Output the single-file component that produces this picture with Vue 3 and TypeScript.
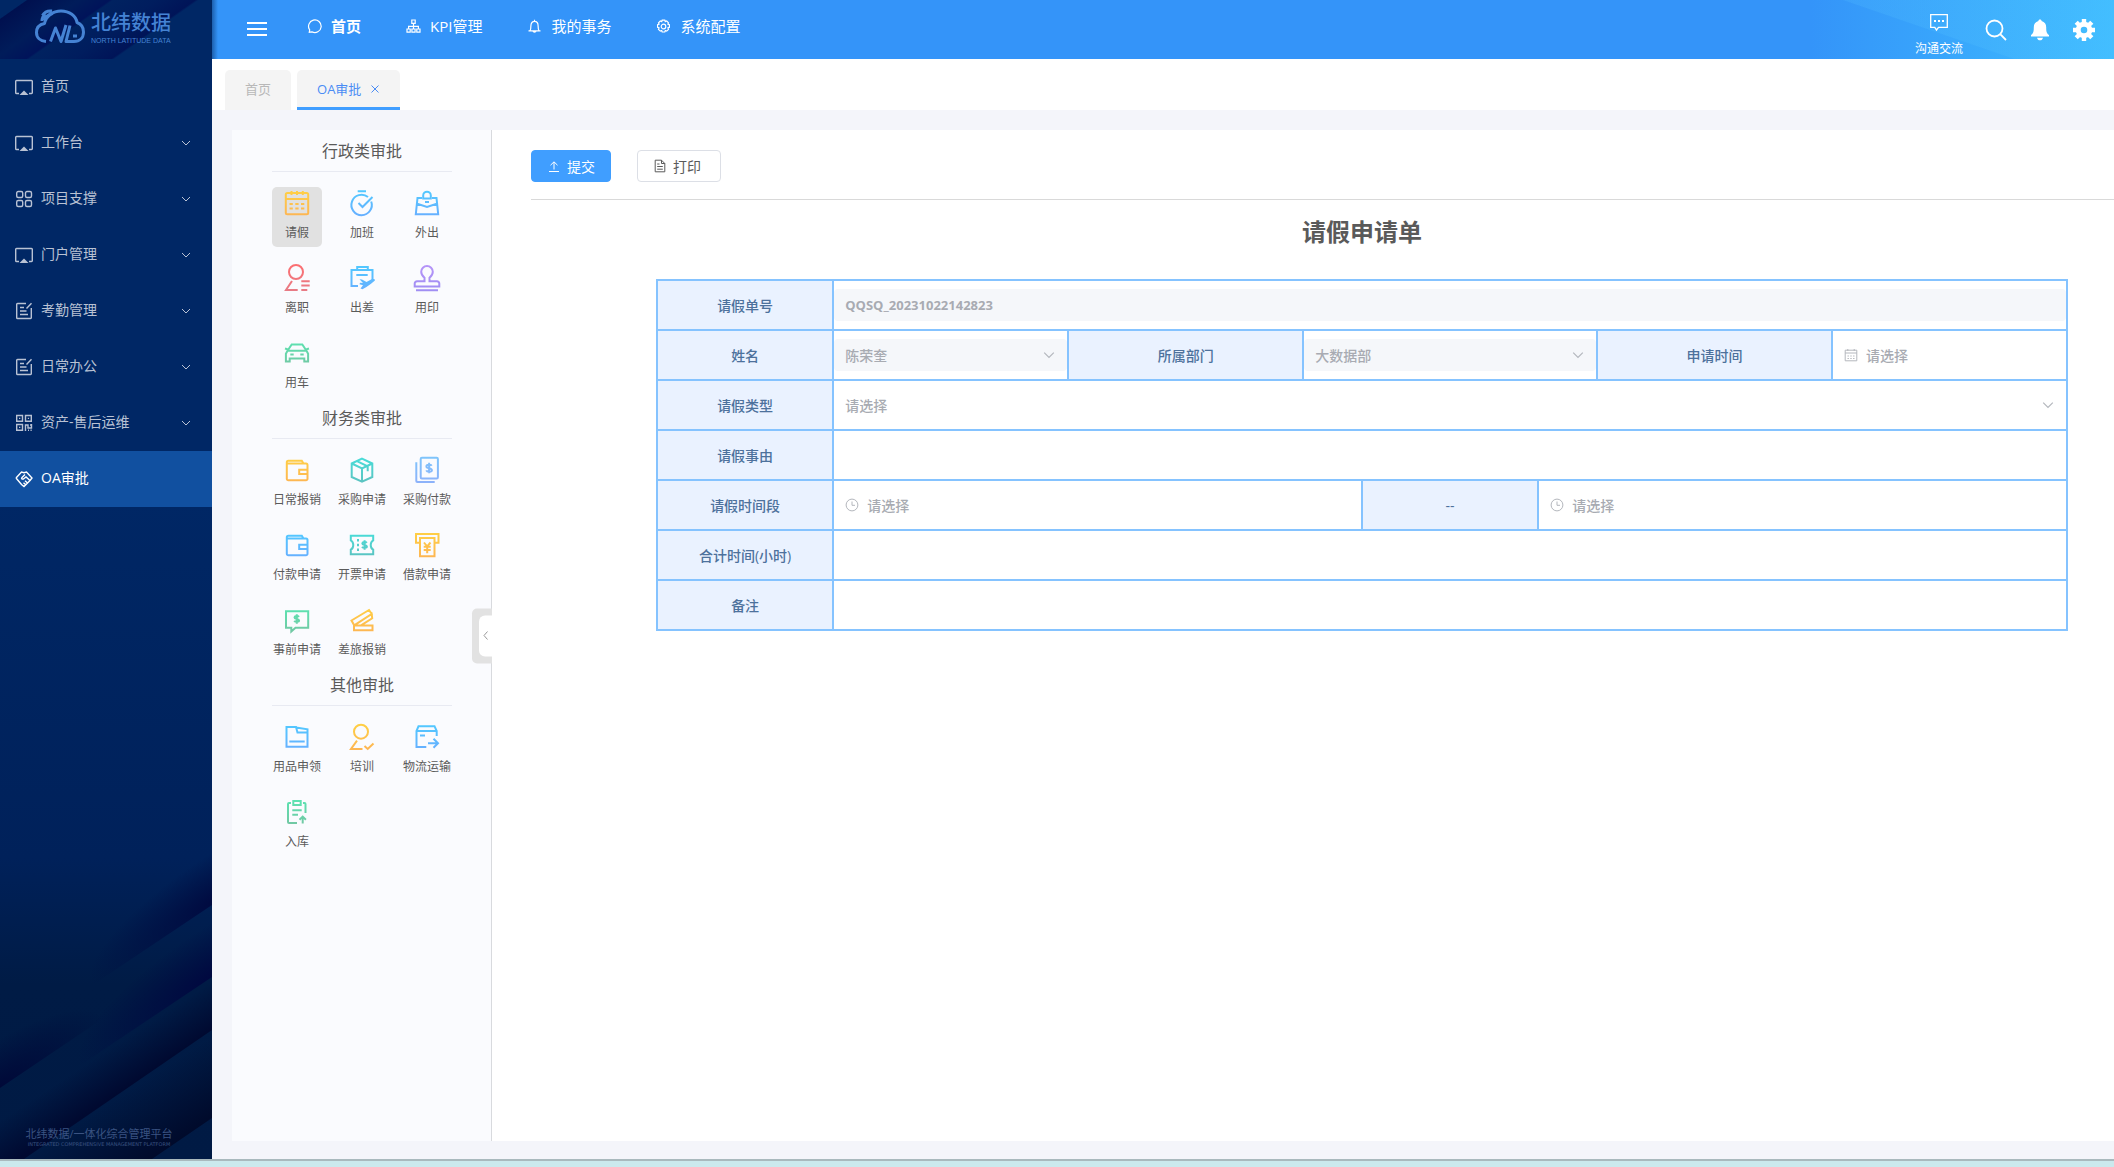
<script setup lang="ts">
import { ref } from 'vue'

interface MenuItem { label: string; icon: string; expandable: boolean; active?: boolean }
interface AppItem { label: string; icon: string; tone: string; active?: boolean }
interface AppSection { title: string; items: AppItem[] }

const menu: MenuItem[] = [
  { label: '首页', icon: 'screen', expandable: false },
  { label: '工作台', icon: 'screen', expandable: true },
  { label: '项目支撑', icon: 'grid', expandable: true },
  { label: '门户管理', icon: 'screen', expandable: true },
  { label: '考勤管理', icon: 'edit', expandable: true },
  { label: '日常办公', icon: 'edit', expandable: true },
  { label: '资产-售后运维', icon: 'qr', expandable: true },
  { label: 'OA审批', icon: 'shake', expandable: false, active: true },
]

const topNav = [
  { label: '首页', icon: 'bubble', active: true },
  { label: 'KPI管理', icon: 'tree', active: false },
  { label: '我的事务', icon: 'bell', active: false },
  { label: '系统配置', icon: 'cog', active: false },
]

const sections: AppSection[] = [
  {
    title: '行政类审批',
    items: [
      { label: '请假', icon: 'leave', tone: 'amber', active: true },
      { label: '加班', icon: 'timer', tone: 'blue' },
      { label: '外出', icon: 'outing', tone: 'blue' },
      { label: '离职', icon: 'resign', tone: 'red' },
      { label: '出差', icon: 'trip', tone: 'blue' },
      { label: '用印', icon: 'stamp', tone: 'purple' },
      { label: '用车', icon: 'car', tone: 'green' },
    ],
  },
  {
    title: '财务类审批',
    items: [
      { label: '日常报销', icon: 'wallet', tone: 'amber' },
      { label: '采购申请', icon: 'box', tone: 'teal' },
      { label: '采购付款', icon: 'bill', tone: 'sky' },
      { label: '付款申请', icon: 'wallet', tone: 'blue' },
      { label: '开票申请', icon: 'ticket', tone: 'teal' },
      { label: '借款申请', icon: 'loan', tone: 'amber' },
      { label: '事前申请', icon: 'quote', tone: 'green' },
      { label: '差旅报销', icon: 'cards', tone: 'amber' },
    ],
  },
  {
    title: '其他审批',
    items: [
      { label: '用品申领', icon: 'folder', tone: 'blue' },
      { label: '培训', icon: 'training', tone: 'amber' },
      { label: '物流运输', icon: 'ship', tone: 'blue' },
      { label: '入库', icon: 'inbound', tone: 'green' },
    ],
  },
]

const tones = [
  { name: 'amber', from: '#ffcf45', to: '#fdb653' },
  { name: 'blue', from: '#52c8ff', to: '#66b0ff' },
  { name: 'sky', from: '#7fc4fb', to: '#8cb2fa' },
  { name: 'red', from: '#fb6f72', to: '#e87b85' },
  { name: 'purple', from: '#b594f8', to: '#a08ef3' },
  { name: 'green', from: '#5be3b1', to: '#72c8a4' },
  { name: 'teal', from: '#48dcd8', to: '#5cc3c1' },
]

const reason = ref('')
const hours = ref('')
const remark = ref('')
const leaveType = ref('')
</script>

<template>
  <div class="page">
    <svg class="sprite" aria-hidden="true">
      <defs>
        <linearGradient v-for="t in tones" :id="'tone-' + t.name" :key="t.name" gradientUnits="userSpaceOnUse" x1="0" y1="2" x2="0" y2="26">
          <stop offset="0" :stop-color="t.from" />
          <stop offset="1" :stop-color="t.to" />
        </linearGradient>
      </defs>
      <symbol id="i-screen" viewBox="0 0 18 18"><path d="M4 15.500H1.500a.8.8 0 0 1-.8-.8V3.300a.8.8 0 0 1 .8-.8h15a.8.8 0 0 1 .8.8v11.400a.8.8 0 0 1-.8.8H14" /><path class="solid" stroke="none" d="M9 12.500l4.500 4.500h-9z" /></symbol>
      <symbol id="i-grid" viewBox="0 0 18 18"><rect x="1.700" y="1.500" width="6" height="6" rx="1.500" /><rect x="10.500" y="1.500" width="6" height="6" rx="1.500" /><rect x="1.700" y="10.500" width="6" height="6" rx="1.500" /><rect x="10.500" y="10.500" width="6" height="6" rx="1.500" /></symbol>
      <symbol id="i-edit" viewBox="0 0 18 18"><path d="M11 1.500H2.500a.8.8 0 0 0-.8.8v13.400a.8.8 0 0 0 .8.8h13a.8.8 0 0 0 .8-.8V6M16.500 1.200L11.500 6.500M5 5.500h4M5 9h6.500M5 12.500h8" /></symbol>
      <symbol id="i-qr" viewBox="0 0 18 18"><path d="M1.700 1.500h5.800v5.800H1.700zM10.500 1.500h5.800v5.800h-5.800zM1.700 10.500h5.800v5.800H1.700zM4 4.400h1.300M12.800 4.400h1.300M4 13.400h1.300M10.500 17v-6h2.500v3h3.500v-4M13 16.300h1M15.500 16.300h1.200M15 11h2" /></symbol>
      <symbol id="i-shake" viewBox="0 0 18 18"><path d="M1 8L6.500 2l2.500.7L11.500 2 17 8l-2 2.500M1 8l5.500 6.500L9 16.500l6-6-4-3.500-2.500 2C7 9.500 6 8.500 7 7.500L10 4.500M12.500 13L10 10.800M10.700 14.800L8.500 12.800" /></symbol>
      <symbol id="i-down" viewBox="0 0 10 10"><path d="M1 3l4 4 4-4" /></symbol>
      <symbol id="i-left" viewBox="0 0 10 10"><path d="M6.500 1L3 5l3.500 4" /></symbol>
      <symbol id="i-close" viewBox="0 0 10 10"><path d="M1.500 1.500l7 7M8.500 1.500l-7 7" /></symbol>
      <symbol id="i-bubble" viewBox="0 0 15 15"><path d="M2.300 13.200l.4-2.300A6.300 6.300 0 1 1 5 12.900z" /></symbol>
      <symbol id="i-tree" viewBox="0 0 15 15"><path d="M5.800 1h3.400v3.400H5.800zM1 10h3.200v3.200H1zM5.900 10h3.200v3.200H5.900zM10.800 10H14v3.200h-3.200zM7.500 4.400V10M2.600 10V7.300h9.800V10" /></symbol>
      <symbol id="i-bell" viewBox="0 0 15 15"><path d="M1.500 11.800h12M3 11.800c.9-1.500.9-2.600.9-5C3.900 4 5.500 2.300 7.500 2.300S11.100 4 11.100 6.800c0 2.400 0 3.500.9 5M7.500 2.300V.7M5.900 12c.3 1.600 2.900 1.600 3.200 0" /></symbol>
      <symbol id="i-cog" viewBox="0 0 15 15"><circle cx="7.500" cy="7.500" r="2.300" /><path d="M6.200 1.200h2.600l.5 1.400 1.400-.6 1.800 1.800-.6 1.400 1.500.5v2.600l-1.500.6.6 1.400-1.800 1.800-1.400-.6-.5 1.500H6.200l-.5-1.500-1.400.6-1.800-1.800.6-1.400-1.500-.6V5.700l1.500-.5-.6-1.400L4.300 2l1.400.6z" /></symbol>
      <symbol id="i-upload" viewBox="0 0 12 14"><path d="M1 12.500h10M6 10.500V3M2.500 6.200L6 2.800l3.500 3.400" /></symbol>
      <symbol id="i-doc" viewBox="0 0 12 14"><path d="M7.500 1.200H1.200v11.600h9.600V4.500zM7.500 1.200v3.300h3.300M3.200 5h2.300M3.200 7.500h5.600M3.200 10.200h5.600" /></symbol>
      <symbol id="i-date" viewBox="0 0 14 14"><path d="M1.200 2.200h11.600v10.600H1.200zM1.200 5h11.600M3.800 1v2M10.200 1v2M3.500 8h1.400M6.300 8h1.400M9.100 8h1.400M3.500 10.500h1.400M6.300 10.500h1.400M9.100 10.500h1.400" /></symbol>
      <symbol id="i-clock" viewBox="0 0 14 14"><circle cx="7" cy="7" r="5.900" /><path d="M7 3.500v3.800h3" /></symbol>
      <symbol id="i-msg" viewBox="0 0 20 20"><path d="M1.700 1.700h16.600v12.600H9.500L7.500 17l-1.700-2.700H1.700z" /><path stroke-width="2" d="M5 8h2M9 8h2M13 8h2" /></symbol>
      <symbol id="i-search" viewBox="0 0 22 22"><circle cx="9.500" cy="9.500" r="8" /><path d="M15.200 15.200l5.800 5.800" /></symbol>
      <symbol id="i-alarm" viewBox="0 0 22 22"><path class="solid" stroke="none" d="M11 .5c1 0 1.600.6 1.600 1.500 3 .8 4.600 3.200 4.600 6.200 0 4.500.5 6.200 2.800 7.800v1.500H2V16c2.300-1.600 2.800-3.300 2.800-7.800 0-3 1.600-5.400 4.600-6.200 0-.9.600-1.500 1.600-1.500zM8 18.700h6c-.4 1.700-1.500 2.600-3 2.600s-2.600-.9-3-2.600z" /></symbol>
      <symbol id="i-gear" viewBox="0 0 22 22"><circle cx="11" cy="11" r="5.800" stroke-width="5" /><path stroke-width="4.400" d="M11 0v4M11 18v4M0 11h4M18 11h4M3.200 3.200l2.800 2.800M16 16l2.800 2.800M3.200 18.800L6 16M16 6l2.800-2.800" /></symbol>

      <symbol id="i-leave" viewBox="0 0 28 28"><rect x="2.800" y="4" width="22.400" height="21.200" rx="1.500" /><path d="M3 10h22M8.500 2v4M14 2v4M19.800 2v4M6.500 15h3.300M12.300 15h3.300M18 15h3.300M6.500 19.500h3.300M12.300 19.500h3.300M18 19.500h3.300" /></symbol>
      <symbol id="i-timer" viewBox="0 0 28 28"><path d="M9.700 2.300H18M20 8a10.200 10.200 0 1 0 3.200 4.500M10.500 14l4 4L24.500 8" /></symbol>
      <symbol id="i-outing" viewBox="0 0 28 28"><path d="M9 9H4.500L2.800 25.200h22.400L23.500 9H19M10.200 9.500V6.500a3.800 3.800 0 0 1 7.600 0v3zM3.500 14.500L14 18l10.500-3.500M12 13h4" /></symbol>
      <symbol id="i-resign" viewBox="0 0 28 28"><circle cx="13" cy="8" r="7" /><path d="M9 17L3 26h11.700M18.300 17.300h8.400M18.300 21.500h8.400M18.300 26h6" /></symbol>
      <symbol id="i-trip" viewBox="0 0 28 28"><path d="M10 22H3.500V6h21v10M9.200 6V3h10.600v3M8.300 11h11.400" /><path class="solid" stroke="none" d="M11.500 15.200l2.500.3 4.500 2.500 5-2.700c2-.8 4 .2 3.500 1-2 2.500-8 6.500-12.500 9l-2-.8 2.500-3.300-3.500-1 .5-1.400 3 .2z" /></symbol>
      <symbol id="i-stamp" viewBox="0 0 28 28"><path d="M11.500 17.300v-3.500c-2-1.600-3.300-3.300-3.300-6a5.800 5.800 0 0 1 11.600 0c0 2.700-1.300 4.400-3.300 6v3.500h7.500a2.300 2.300 0 0 1 2.300 2.300v3H1.700v-3A2.300 2.300 0 0 1 4 17.300zM3 26.200h22" /></symbol>
      <symbol id="i-car" viewBox="0 0 28 28"><path d="M4.500 11.800L8.700 5.500h10.600l4.200 6.300M2 9.500l2.500.8M26 9.500l-2.500.8M4.500 11.800h19l1.600 3v7.800h-3.800v-3H6.700v3H2.900v-7.800zM7.300 15.600h3.400M17.300 15.600h3.400" /></symbol>
      <symbol id="i-wallet" viewBox="0 0 28 28"><path d="M3.800 7.500v15.300a1.500 1.500 0 0 0 1.500 1.500h17.700a1.500 1.500 0 0 0 1.500-1.500V9a1.500 1.500 0 0 0-1.500-1.500zM3.800 7.500V6.200a1.500 1.500 0 0 1 1.500-1.500h13.500l1.700 2.800M24.500 13.700h-8.300v4.400h8.300" /></symbol>
      <symbol id="i-box" viewBox="0 0 28 28"><path d="M14 2.700l10.300 4.800V21L14 25.600 3.700 21V7.500zM3.700 7.500L14 12.500l10.300-5M14 12.500v13M9 5.200L19.700 10.300v5" /></symbol>
      <symbol id="i-bill" viewBox="0 0 28 28"><rect x="7.700" y="1.800" width="17.200" height="20.600" rx="1.200" /><path d="M3.300 6.300V25a1 1 0 0 0 1 1h17.400M18.700 9.800c-1-1.500-5.300-1.300-5.300.7 0 2.300 5.500 1.300 5.500 3.700 0 2-4.800 2-5.700.2M16.100 6.800v10.500" /></symbol>
      <symbol id="i-ticket" viewBox="0 0 28 28"><path d="M2.800 4.700h22.400v4.600c-3.300 1.700-3.300 7.700 0 9.400v4.600H2.800v-4.600c3.300-1.700 3.300-7.700 0-9.400zM10 8v2.500M10 12.800v2.500M10 17.500V20M18.800 11.800c-1-1.300-4.500-1-4.500.6 0 2 4.600 1 4.600 3.200 0 1.600-4 1.600-4.800.1M16.600 9.300v9.400" /></symbol>
      <symbol id="i-loan" viewBox="0 0 28 28"><path d="M7 11.700H3V3h22.500v8.700h-4M7 7h14.500v18.200H7zM11 11.500l3.200 4 3.300-4M10.700 15.700h7M10.700 19h7M14.200 15.700v6.500" /></symbol>
      <symbol id="i-quote" viewBox="0 0 28 28"><path d="M3 5.300h22.200v16.500H12.500L8.300 25.500v-3.700H3zM16 10.800c-1-1.300-4.500-1-4.500.6 0 2 4.600 1 4.600 3.200 0 1.600-4 1.600-4.800.1M13.800 8.300v9.400" /></symbol>
      <symbol id="i-cards" viewBox="0 0 28 28"><path d="M6.200 19.300L3.500 14.500 21 4l2.700 4zM6.200 19.300L23.700 8l.5 4.300L13 19.300M6 19.500h18.500v4.700H6z" /></symbol>
      <symbol id="i-folder" viewBox="0 0 28 28"><path d="M3.500 4h9.500l1.500 5.500h10V23.800h-21zM13 4.500l11.500 1.800v3.200M6.300 18.500h15.400" /></symbol>
      <symbol id="i-training" viewBox="0 0 28 28"><circle cx="13" cy="8.700" r="7" /><path d="M9 17.700L3 26h11.500M16.500 23l3.200 3 5.800-5.500" /></symbol>
      <symbol id="i-ship" viewBox="0 0 28 28"><path d="M13.300 24H3.500V8l2-4.800h16L23.700 8v5M3.500 8h20.200M7 12.500h5M15 20.300h9.700M20.500 15.800l4.500 4.500-4.500 4.500" /></symbol>
      <symbol id="i-inbound" viewBox="0 0 28 28"><path d="M8 5H6a1 1 0 0 0-1 1v18a1 1 0 0 0 1 1h8M20 5h1.500a1 1 0 0 1 1 1v9M10.300 3h7.400v4h-7.400zM9.300 12.300h9.400M9.300 16.700h5.700M19.700 25.500v-6.800M16.500 21.800l3.200-3.200 3.200 3.200" /></symbol>
    </svg>

    <div class="shell">
      <aside class="sidebar">
        <svg class="streaks" viewBox="0 0 212 309" preserveAspectRatio="none" aria-hidden="true">
          <defs>
            <radialGradient id="streak-a" gradientUnits="userSpaceOnUse" cx="0" cy="0" r="1" gradientTransform="translate(216 50) rotate(-34) scale(150 42)"><stop offset="0" stop-color="#000a40" /><stop offset="1" stop-color="#000a40" stop-opacity="0" /></radialGradient>
            <radialGradient id="streak-b" gradientUnits="userSpaceOnUse" cx="0" cy="0" r="1" gradientTransform="translate(212 127) rotate(-34) scale(160 46)"><stop offset="0" stop-color="#000840" /><stop offset="1" stop-color="#000840" stop-opacity="0" /></radialGradient>
            <radialGradient id="streak-c" gradientUnits="userSpaceOnUse" cx="0" cy="0" r="1" gradientTransform="translate(-4 240) rotate(-34) scale(130 42)"><stop offset="0" stop-color="#000838" /><stop offset="1" stop-color="#000838" stop-opacity="0" /></radialGradient>
            <linearGradient id="streak-d" gradientUnits="userSpaceOnUse" x1="85" y1="215" x2="108" y2="250"><stop offset="0" stop-color="#000930" stop-opacity="0" /><stop offset="1" stop-color="#000930" /></linearGradient>
            <linearGradient id="streak-e" gradientUnits="userSpaceOnUse" x1="130" y1="240" x2="168" y2="298"><stop offset="0" stop-color="#000a2b" stop-opacity="0" /><stop offset="1" stop-color="#000a2b" /></linearGradient>
          </defs>
          <path fill="url(#streak-a)" d="M0 0H212V55L0 197z" />
          <path fill="url(#streak-c)" d="M0 140L120 80V157L0 238z" />
          <path fill="url(#streak-b)" d="M212 55V127L0 269V197z" />
          <path fill="url(#streak-d)" d="M212 127V180L24 309H0V240z" />
          <path fill="url(#streak-e)" d="M212 180V268L152 309H24z" />
        </svg>
        <div class="brand">
          <svg class="cloud" viewBox="0 0 50 36" aria-hidden="true">
            <path d="M11 32.500C5 32 1.500 28.500 1.500 23.500c0-4.500 3-8 8-9C11 7 18 2 26 2c8.500 0 15 5 16 11.500 4 1.500 6.500 5 6.500 9.500 0 6-4 9.500-9.500 9.500H31l4-16" />
            <path d="M15.500 32.500l5-13.500 5.500 13.500 5-16.500M7 12c0-3 1-5 3-7M7.500 6.500C9.500 3 13 1.500 17 2M10 11c1-4 4-6 8-6.500M38 27h4" />
          </svg>
          <div class="brand-text">
            <strong>北纬数据</strong>
            <span>NORTH LATITUDE DATA</span>
          </div>
        </div>
        <nav class="menu">
          <a v-for="item in menu" :key="item.label" href="#" class="menu-item" :class="{ active: item.active }">
            <svg class="menu-icon"><use :href="'#i-' + item.icon" /></svg>
            <span>{{ item.label }}</span>
            <svg v-if="item.expandable" class="menu-arrow"><use href="#i-down" /></svg>
          </a>
        </nav>
        <div class="slogan">
          <p class="slogan-zh">北纬数据/一体化综合管理平台</p>
          <p class="slogan-en">INTEGRATED COMPREHENSIVE MANAGEMENT PLATFORM</p>
        </div>
      </aside>

      <div class="main">
        <header class="topbar">
          <button type="button" class="burger" aria-label="菜单"><i></i><i></i><i></i></button>
          <nav class="topnav">
            <a v-for="item in topNav" :key="item.label" href="#" :class="{ active: item.active }">
              <svg class="nav-icon"><use :href="'#i-' + item.icon" /></svg>
              <span>{{ item.label }}</span>
            </a>
          </nav>
          <div class="tools">
            <button type="button" class="tool chat"><svg class="msg-icon"><use href="#i-msg" /></svg><span>沟通交流</span></button>
            <button type="button" class="tool" aria-label="搜索"><svg class="tool-icon"><use href="#i-search" /></svg></button>
            <button type="button" class="tool" aria-label="通知"><svg class="tool-icon"><use href="#i-alarm" /></svg></button>
            <button type="button" class="tool" aria-label="设置"><svg class="tool-icon"><use href="#i-gear" /></svg></button>
          </div>
        </header>

        <div class="tabs">
          <a href="#" class="tab">首页</a>
          <a href="#" class="tab current">OA审批<svg class="tab-close"><use href="#i-close" /></svg></a>
        </div>

        <div class="content">
          <section class="apps">
            <div v-for="section in sections" :key="section.title" class="app-section">
              <h2>{{ section.title }}</h2>
              <div class="app-grid">
                <button v-for="app in section.items" :key="app.label" type="button" class="app" :class="{ active: app.active }">
                  <svg class="app-icon" :class="app.tone"><use :href="'#i-' + app.icon" /></svg>
                  <span>{{ app.label }}</span>
                </button>
              </div>
            </div>
            <button type="button" class="collapse" aria-label="收起"><span><svg><use href="#i-left" /></svg></span></button>
          </section>

          <form class="sheet" @submit.prevent>
            <div class="actions">
              <button type="submit" class="btn primary"><svg><use href="#i-upload" /></svg>提交</button>
              <button type="button" class="btn"><svg><use href="#i-doc" /></svg>打印</button>
            </div>
            <h1>请假申请单</h1>
            <div class="table-wrap">
              <table>
                <colgroup><col v-for="n in 24" :key="n" /></colgroup>
                <tbody>
                  <tr>
                    <th colspan="3"><label for="f-no">请假单号</label></th>
                    <td colspan="21"><input id="f-no" class="control" type="text" value="QQSQ_20231022142823" disabled /></td>
                  </tr>
                  <tr>
                    <th colspan="3"><label for="f-name">姓名</label></th>
                    <td colspan="4"><div class="field"><select id="f-name" class="control" disabled><option>陈荣奎</option></select><svg class="caret"><use href="#i-down" /></svg></div></td>
                    <th colspan="4"><label for="f-dept">所属部门</label></th>
                    <td colspan="5"><div class="field"><select id="f-dept" class="control" disabled><option>大数据部</option></select><svg class="caret"><use href="#i-down" /></svg></div></td>
                    <th colspan="4"><label for="f-date">申请时间</label></th>
                    <td colspan="4"><div class="field"><svg class="prefix"><use href="#i-date" /></svg><input id="f-date" class="control prefixed" type="text" placeholder="请选择" /></div></td>
                  </tr>
                  <tr>
                    <th colspan="3"><label for="f-type">请假类型</label></th>
                    <td colspan="21"><div class="field"><select id="f-type" v-model="leaveType" class="control"><option value="">请选择</option></select><svg class="caret"><use href="#i-down" /></svg></div></td>
                  </tr>
                  <tr>
                    <th colspan="3"><label for="f-reason">请假事由</label></th>
                    <td colspan="21"><input id="f-reason" v-model="reason" class="control" type="text" /></td>
                  </tr>
                  <tr>
                    <th colspan="3"><label for="f-start">请假时间段</label></th>
                    <td colspan="9"><div class="field"><svg class="prefix"><use href="#i-clock" /></svg><input id="f-start" class="control prefixed" type="text" placeholder="请选择" /></div></td>
                    <th colspan="3"><label for="f-end">--</label></th>
                    <td colspan="9"><div class="field"><svg class="prefix"><use href="#i-clock" /></svg><input id="f-end" class="control prefixed" type="text" placeholder="请选择" /></div></td>
                  </tr>
                  <tr>
                    <th colspan="3"><label for="f-hours">合计时间(小时)</label></th>
                    <td colspan="21"><input id="f-hours" v-model="hours" class="control" type="text" /></td>
                  </tr>
                  <tr>
                    <th colspan="3"><label for="f-remark">备注</label></th>
                    <td colspan="21"><input id="f-remark" v-model="remark" class="control" type="text" /></td>
                  </tr>
                </tbody>
              </table>
            </div>
          </form>
        </div>
      </div>
    </div>
    <div class="desktop-edge"></div>
  </div>
</template>

<style>
body {
  margin: 0;
}
</style>

<style scoped>
.page {
  display: flex;
  flex-direction: column;
  min-height: 100vh;
  font-family: "Open Sans", "Noto Sans CJK SC", sans-serif;
  font-size: 14px;
  color: #5a5a5a;
  background: #f4f5fa;
}
.page *,
.page *::before {
  box-sizing: border-box;
}
a {
  color: inherit;
  text-decoration: none;
}
button {
  padding: 0;
  border: 0;
  background: none;
  font: inherit;
  color: inherit;
  cursor: pointer;
}
svg {
  flex: none;
  display: block;
  fill: none;
  stroke: currentColor;
}
.solid {
  fill: var(--paint, currentColor);
}
.sprite {
  position: absolute;
  width: 0;
  height: 0;
}
.shell {
  flex: 1;
  display: flex;
}
.desktop-edge {
  height: 8px;
  border-top: 2px solid #a9b9bd;
  background: #cbe9ed;
}

/* sidebar */
.sidebar {
  position: relative;
  flex: none;
  display: flex;
  flex-direction: column;
  width: 212px;
  background: linear-gradient(#002765 0, #002765 500px, #00215a 74%, #001b45 85%, #001a44 100%);
}
.streaks {
  position: absolute;
  left: 0;
  bottom: 0;
  width: 212px;
  height: 309px;
  stroke: none;
}
.brand {
  display: flex;
  align-items: center;
  gap: 6px;
  height: 59px;
  padding: 0 0 6px 35px;
  color: #4583d4;
  background: linear-gradient(145deg, #002765 15px, #00104f 16px, #001c5a 45px, #00135a 63px, #002260 65px, #001d5e 90px, #001458 112px, #002765 114px);
}
.cloud {
  width: 50px;
  height: 36px;
  stroke-width: 3;
  stroke-linejoin: round;
}
.brand-text {
  display: flex;
  flex-direction: column;
  padding-top: 4px;
}
.brand-text strong {
  font-size: 20px;
  line-height: 24px;
  font-weight: 500;
}
.brand-text span {
  font-family: "Liberation Sans", sans-serif;
  font-size: 7px;
  line-height: 12px;
  white-space: nowrap;
}
.menu-item {
  display: flex;
  align-items: center;
  gap: 8px;
  height: 56px;
  padding: 0 21px 0 15px;
  line-height: 20px;
  color: #b9c2d4;
}
.menu-item span {
  padding-bottom: 2px;
}
.menu-item.active {
  color: #fff;
  background: #1150a0;
}
.menu-icon {
  width: 18px;
  height: 18px;
  stroke-width: 1.4;
}
.menu-arrow {
  width: 10px;
  height: 10px;
  margin-left: auto;
}
.slogan {
  position: relative;
  margin-top: auto;
  padding: 0 14px 12px 0;
  text-align: center;
  color: #3a5382;
}
.slogan p {
  margin: 0;
  white-space: nowrap;
}
.slogan-zh {
  font-size: 11px;
  line-height: 14px;
}
.slogan-en {
  font-family: "DejaVu Sans", sans-serif;
  font-size: 5px;
  line-height: 6px;
}

/* header */
.main {
  flex: 1;
  min-width: 0;
  display: flex;
  flex-direction: column;
}
.topbar {
  display: flex;
  height: 59px;
  padding: 0 19px 0 35px;
  color: #fff;
  background: linear-gradient(90deg, rgba(0, 30, 80, 0.45), transparent) left / 6px 100% no-repeat,
    linear-gradient(19deg, transparent 68px, rgba(90, 200, 255, 0.18) 69px) right / 310px 100% no-repeat,
    linear-gradient(90deg, #3494f9 84%, #3ebcff);
}
.burger {
  display: flex;
  flex-direction: column;
  gap: 4px;
  width: 20px;
  height: 14px;
  margin-top: 22px;
}
.burger i {
  width: 20px;
  height: 2px;
  background: #fff;
}
.topnav {
  display: flex;
  gap: 45px;
  height: 53px;
  margin-left: 40px;
}
.topnav a {
  display: flex;
  align-items: center;
  gap: 9px;
  font-size: 15px;
  line-height: 20px;
  white-space: nowrap;
}
.topnav span {
  padding-bottom: 1px;
}
.topnav .active {
  font-weight: 700;
}
.nav-icon {
  width: 15px;
  height: 15px;
  stroke-width: 1.2;
}
.tools {
  display: flex;
  gap: 22px;
  margin-left: auto;
}
.tool {
  display: flex;
  align-items: center;
}
.chat {
  flex-direction: column;
  gap: 8px;
  padding-top: 13px;
  font-size: 12px;
  line-height: 16px;
}
.msg-icon {
  width: 20px;
  height: 20px;
  stroke-width: 1.3;
}
.tool-icon {
  width: 22px;
  height: 22px;
  stroke-width: 1.8;
}

/* page tabs */
.tabs {
  display: flex;
  align-items: flex-end;
  gap: 6px;
  height: 51px;
  padding-left: 13px;
  background: #fff;
}
.tab {
  display: flex;
  align-items: center;
  gap: 9px;
  height: 40px;
  padding: 0 20px 3px;
  border-radius: 5px 5px 0 0;
  font-size: 13px;
  line-height: 20px;
  color: #b8b8b8;
  background: #f4f4f4;
}
.tab.current {
  padding-bottom: 0;
  border-bottom: 3px solid #409eff;
  color: #4a8cf5;
}
.tab-close {
  width: 10px;
  height: 10px;
}

/* application picker */
.content {
  flex: 1;
  display: flex;
  padding: 20px 0 18px 20px;
}
.apps {
  position: relative;
  flex: none;
  width: 260px;
  padding: 0 39px 0 40px;
  border-right: 1px solid #d8dade;
  background: #fafbfe;
}
.app-section h2 {
  height: 42px;
  margin: 0 0 15px;
  border-bottom: 1px solid #e8eaf2;
  font-size: 16px;
  line-height: 43px;
  font-weight: 400;
  text-align: center;
}
.app-grid {
  display: grid;
  grid-template-columns: repeat(3, 50px);
  gap: 15px;
}
.app {
  display: flex;
  flex-direction: column;
  align-items: center;
  gap: 8px;
  height: 60px;
  padding-top: 2px;
  border-radius: 5px;
  font-size: 12px;
  line-height: 16px;
  white-space: nowrap;
}
.app.active {
  background: #e1e1e1;
}
.app-icon {
  width: 28px;
  height: 28px;
  stroke: var(--paint);
  stroke-width: 2;
}
.amber { --paint: url(#tone-amber); }
.blue { --paint: url(#tone-blue); }
.sky { --paint: url(#tone-sky); }
.red { --paint: url(#tone-red); }
.purple { --paint: url(#tone-purple); }
.green { --paint: url(#tone-green); }
.teal { --paint: url(#tone-teal); }
.collapse {
  position: absolute;
  top: 50%;
  right: -1px;
  display: flex;
  align-items: center;
  justify-content: flex-end;
  width: 20px;
  height: 55px;
  border-radius: 5px 0 0 5px;
  background: #e2e2e2;
  transform: translateY(-50%);
}
.collapse span {
  display: flex;
  align-items: center;
  width: 13px;
  height: 41px;
  padding-left: 2px;
  border-radius: 6px 0 0 6px;
  color: #999;
  background: #fff;
}
.collapse svg {
  width: 10px;
  height: 10px;
}

/* leave form */
.sheet {
  flex: 1;
  min-width: 0;
  padding: 20px 0 0 39px;
  background: #fff;
}
.actions {
  display: flex;
  gap: 26px;
  padding-bottom: 17px;
  border-bottom: 1px solid #d9d9d9;
}
.btn {
  display: flex;
  align-items: center;
  gap: 7px;
  height: 32px;
  padding: 0 19px 0 16px;
  border: 1px solid #dcdfe6;
  border-radius: 4px;
  background: #fff;
}
.btn.primary {
  padding: 0 15px 0 16px;
  border-color: #409eff;
  color: #fff;
  background: #409eff;
}
.btn svg {
  width: 12px;
  height: 14px;
}
.table-wrap,
h1 {
  margin: 0 46px 0 125px;
}
h1 {
  padding: 16px 0 31px;
  font-size: 24px;
  line-height: 32px;
  text-align: center;
}
table {
  width: 100%;
  table-layout: fixed;
  border-collapse: collapse;
}
th,
td {
  height: 50px;
  padding: 0;
  border: 2px solid #85c3ff;
}
th {
  font-weight: 500;
  color: #4d719c;
  background: #eaf2ff;
}
.field {
  position: relative;
}
.control {
  display: block;
  width: 100%;
  height: 32px;
  padding: 0 11px;
  border: 0;
  border-radius: 4px;
  outline: 0;
  font: 500 14px "Open Sans", "Noto Sans CJK SC", sans-serif;
  color: #a8abb2;
  background: #fff;
  opacity: 1;
  appearance: none;
}
#f-no {
  font-size: 13px;
  font-weight: 700;
}
.control:disabled {
  background: #f5f7fa;
}
.control::placeholder {
  color: #a8abb2;
  opacity: 1;
}
.prefixed {
  padding-left: 33px;
}
.caret,
.prefix {
  position: absolute;
  color: #b4b7bd;
}
.caret {
  top: 10px;
  right: 12px;
  width: 12px;
  height: 12px;
}
.prefix {
  top: 9px;
  left: 11px;
  width: 14px;
  height: 14px;
}
</style>
